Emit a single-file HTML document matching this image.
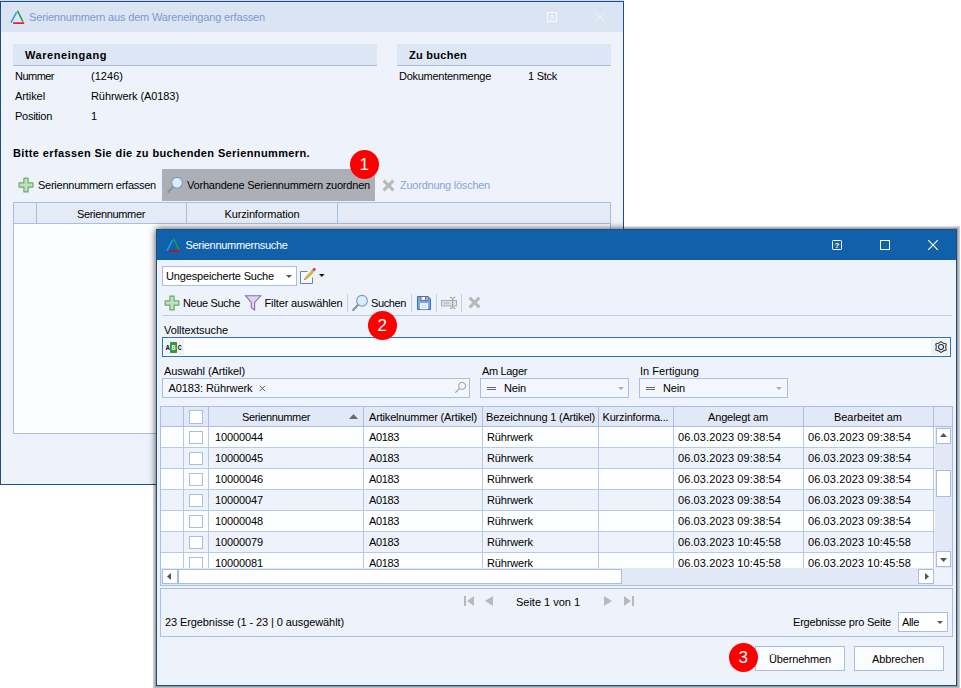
<!DOCTYPE html><html><head><meta charset="utf-8"><title>Seriennummernsuche</title><style>
html,body{margin:0;padding:0;}
body{width:961px;height:688px;position:relative;overflow:hidden;background:#fff;font-family:"Liberation Sans",sans-serif;font-size:11px;}
.a{position:absolute;box-sizing:border-box;}
.t{position:absolute;height:16px;line-height:16px;white-space:nowrap;}
svg{position:absolute;overflow:visible;}
</style></head><body><div class="a" style="left:156px;top:229px;width:801px;height:457px;box-shadow:0 0 0 1px rgba(0,0,0,0.16),0 0 0 2px rgba(0,0,0,0.09),0 0 0 3px rgba(0,0,0,0.12),0 1px 1px 3px rgba(0,0,0,0.08);"></div><div class="a" style="left:0px;top:0px;width:624px;height:1px;background:#cddaef;"></div><div class="a" style="left:0px;top:1px;width:624px;height:484px;background:#eef3fb;border:1px solid #1b4f86;"></div><div class="a" style="left:1px;top:2px;width:622px;height:30px;background:#dbe4f2;"></div><svg style="left:10px;top:10px" width="15" height="15" viewBox="0 0 15 15"><path d="M6.6 2.2 L1 12.7" stroke="#1ea0e6" stroke-width="1.45" fill="none"/><path d="M7.4 0.6 L12.9 11.6" stroke="#1f9e3e" stroke-width="1.5" fill="none"/><path d="M3.2 13.1 H14.2" stroke="#e2001a" stroke-width="1.5" fill="none"/></svg><svg style="left:547px;top:12px" width="10" height="10" viewBox="0 0 10 10"><rect x="0.5" y="0.5" width="9" height="9" fill="none" stroke="#f6f8fc" stroke-width="1"/><text x="5" y="8" font-size="8" font-weight="bold" fill="#f6f8fc" text-anchor="middle" font-family="Liberation Sans, sans-serif">?</text></svg><svg style="left:595px;top:12px" width="10" height="10" viewBox="0 0 10 10"><path d="M0.3 0.3 L9.7 9.7 M9.7 0.3 L0.3 9.7" stroke="#eef2f9" stroke-width="1" fill="none"/></svg><div class="a" style="left:13px;top:44px;width:364px;height:22px;background:#dde6f4;border-bottom:1px solid #a9bee2;"></div><div class="a" style="left:397px;top:44px;width:214px;height:22px;background:#dde6f4;border-bottom:1px solid #a9bee2;"></div><div class="a" style="left:162px;top:169px;width:213px;height:32px;background:#acafb5;"></div><svg style="left:17.5px;top:177px" width="16" height="16" viewBox="0 0 16 16"><path d="M5.9 1.1 H10.1 V5.9 H14.9 V10.1 H10.1 V14.9 H5.9 V10.1 H1.1 V5.9 H5.9 Z" fill="#c3e0be" stroke="#68ad68" stroke-width="1.2" stroke-linejoin="round"/></svg><svg style="left:167px;top:177px" width="16" height="16" viewBox="0 0 16 16"><path d="M5.9 9.9 L1.2 15" stroke="#8395aa" stroke-width="2.2" stroke-linecap="round"/><circle cx="10" cy="5.8" r="5.4" fill="#d7edfd" stroke="#8197b3" stroke-width="1.1"/></svg><svg style="left:381.5px;top:178.7px" width="13" height="13" viewBox="0 0 13 13"><path d="M1.6 1.6 L11.4 11.4 M11.4 1.6 L1.6 11.4" stroke="#b9b9b9" stroke-width="3" fill="none"/></svg><div class="a" style="left:13px;top:202px;width:598px;height:232px;background:#fcfdff;border:1px solid #a9bee2;"></div><div class="a" style="left:13px;top:203px;width:598px;height:1px;background:#b7c8e7;"></div><div class="a" style="left:14px;top:203px;width:596px;height:21px;background:#e4ebf7;border-bottom:1px solid #a9bee2;"></div><div class="a" style="left:36px;top:203px;width:1px;height:21px;background:#a9bee2;"></div><div class="a" style="left:186px;top:203px;width:1px;height:21px;background:#a9bee2;"></div><div class="a" style="left:337px;top:203px;width:1px;height:21px;background:#a9bee2;"></div><div class="a" style="left:0;top:0;width:624px;height:485px;overflow:hidden;"><div class="a" style="left:156px;top:229px;width:801px;height:457px;box-shadow:0 0 7px 0 rgba(0,0,0,0.75);"></div></div><div class="a" style="left:156px;top:229px;width:801px;height:457px;background:#eef3fb;border:1px solid #17508c;"></div><div class="a" style="left:157px;top:230px;width:799px;height:30px;background:#1161aa;"></div><svg style="left:166px;top:238px" width="15" height="15" viewBox="0 0 15 15"><path d="M6.6 2.2 L1 12.7" stroke="#1ea0e6" stroke-width="1.45" fill="none"/><path d="M7.4 0.6 L12.9 11.6" stroke="#1f9e3e" stroke-width="1.5" fill="none"/><path d="M3.2 13.1 H14.2" stroke="#e2001a" stroke-width="1.5" fill="none"/></svg><svg style="left:832px;top:240px" width="10" height="10" viewBox="0 0 10 10"><rect x="0.5" y="0.5" width="9" height="9" rx="0.8" fill="none" stroke="#fff" stroke-width="1"/><text x="5" y="8" font-size="8" font-weight="bold" fill="#fff" text-anchor="middle" font-family="Liberation Sans, sans-serif">?</text></svg><svg style="left:880px;top:240px" width="10" height="10" viewBox="0 0 10 10"><rect x="0.5" y="0.5" width="9" height="9" fill="none" stroke="#fff" stroke-width="1"/></svg><svg style="left:928px;top:240px" width="10" height="10" viewBox="0 0 10 10"><path d="M0.2 0.2 L9.8 9.8 M9.8 0.2 L0.2 9.8" stroke="#fff" stroke-width="1.15" fill="none"/></svg><div class="a" style="left:162px;top:266px;width:135px;height:20px;background:#fff;border:1px solid #a9bee2;"></div><svg style="left:286px;top:275px" width="6" height="3" viewBox="0 0 6 3"><path d="M0 0 H6 L3 3 Z" fill="#555"/></svg><svg style="left:300px;top:267px" width="18" height="18" viewBox="0 0 18 18"><rect x="1" y="5" width="11" height="11" fill="#f4f7fd"/><path d="M7.5 4.5 H0.5 V16.5 H12.5 V10.5" fill="none" stroke="#6f8399" stroke-width="1"/><path d="M4.3 13 L7.3 12 L5.1 9.9 Z" fill="#c9a76c"/><path d="M4.3 13 L5.6 12.6 L4.8 11.7 Z" fill="#333"/><path d="M6.2 11 L12.3 4.4" stroke="#e2ba4e" stroke-width="3" fill="none"/><path d="M6.9 11.6 L13 5" stroke="#c99a35" stroke-width="0.8" fill="none"/><path d="M12.3 4.4 L13.5 3.1" stroke="#9aa7b8" stroke-width="3" fill="none"/><path d="M14.1 2.5 L14.4 2.2" stroke="#e23a48" stroke-width="2.8" stroke-linecap="round" fill="none"/></svg><svg style="left:319px;top:274px" width="5.6" height="3" viewBox="0 0 6 3"><path d="M0 0 H6 L3 3 Z" fill="#111"/></svg><svg style="left:163.5px;top:295px" width="16" height="16" viewBox="0 0 16 16"><path d="M5.9 1.1 H10.1 V5.9 H14.9 V10.1 H10.1 V14.9 H5.9 V10.1 H1.1 V5.9 H5.9 Z" fill="#c3e0be" stroke="#68ad68" stroke-width="1.2" stroke-linejoin="round"/></svg><svg style="left:244px;top:295px" width="18" height="17" viewBox="0 0 18 17"><path d="M1.6 0.8 H16.7 L10.6 7.4 V15 L7.3 12.8 V7.4 Z" fill="#ded6f0" stroke="#8a6fa8" stroke-width="1.1" stroke-linejoin="miter"/></svg><div class="a" style="left:347px;top:294px;width:1px;height:18px;background:#c3d0e6;"></div><svg style="left:352px;top:295px" width="16" height="16" viewBox="0 0 16 16"><path d="M5.9 9.9 L1.2 15" stroke="#8395aa" stroke-width="2.2" stroke-linecap="round"/><circle cx="10" cy="5.8" r="5.4" fill="#d7edfd" stroke="#8197b3" stroke-width="1.1"/></svg><div class="a" style="left:411px;top:294px;width:1px;height:18px;background:#c3d0e6;"></div><svg style="left:416px;top:295px" width="16" height="16" viewBox="0 0 16 16"><path d="M1.5 1.5 H12 L14.5 4 V14.5 H1.5 Z" fill="#7ba6e6" stroke="#3d6dc2" stroke-width="1"/><rect x="5" y="1.6" width="7" height="3.9" fill="#f0f2f5" stroke="#5a5f68" stroke-width="0.8"/><rect x="9" y="2.3" width="1.6" height="2.3" fill="#5a5f68"/><rect x="4" y="8.2" width="8" height="6" fill="#fff"/><path d="M5 10.2 H11 M5 12.3 H11" stroke="#a8d0f0" stroke-width="0.9"/></svg><div class="a" style="left:436px;top:294px;width:1px;height:18px;background:#c3d0e6;"></div><svg style="left:441px;top:296px" width="17" height="14" viewBox="0 0 17 14"><rect x="0.5" y="4.5" width="15" height="5.5" fill="#e2e2e2" stroke="#ababab"/><rect x="2.5" y="6" width="6" height="2.5" fill="#c9c9c9"/><path d="M8.8 1.3 Q11.6 1.3 11.6 3 V10.8 Q11.6 12.5 8.8 12.5 M14.4 1.3 Q11.6 1.3 11.6 3 M11.6 10.8 Q11.6 12.5 14.4 12.5" stroke="#999" stroke-width="1" fill="none"/></svg><div class="a" style="left:461px;top:294px;width:1px;height:18px;background:#c3d0e6;"></div><svg style="left:467.7px;top:296.4px" width="13" height="13" viewBox="0 0 13 13"><path d="M1.6 1.6 L11.4 11.4 M11.4 1.6 L1.6 11.4" stroke="#b8b8b8" stroke-width="3" fill="none"/></svg><div class="a" style="left:162px;top:315px;width:790px;height:1px;background:#bccbe5;"></div><div class="a" style="left:162px;top:337px;width:789px;height:20px;background:#fbfcfe;border:1px solid #2f6fb6;"></div><svg style="left:164px;top:339px" width="20" height="16" viewBox="0 0 20 16"><rect x="0" y="0" width="20" height="16" fill="#eef1f6"/><rect x="6" y="3" width="7" height="11" rx="0.8" fill="#3a9440"/><text x="1.8" y="11.2" font-size="6.6" font-weight="bold" font-family="Liberation Mono, monospace" fill="#111">A</text><text x="7.6" y="11.2" font-size="6.6" font-weight="bold" font-family="Liberation Mono, monospace" fill="#e8f4e8">B</text><text x="13.8" y="11.2" font-size="6.6" font-weight="bold" font-family="Liberation Mono, monospace" fill="#111">C</text></svg><div class="a" style="left:931px;top:339px;width:18px;height:16px;background:#eef2fa;"></div><svg style="left:935px;top:341px" width="12" height="12" viewBox="0 0 12 12"><path d="M6 0.5 Q7.6 2.3 11.2 3.1 Q10.2 6 11.2 8.9 Q7.6 9.7 6 11.5 Q4.4 9.7 0.8 8.9 Q1.8 6 0.8 3.1 Q4.4 2.3 6 0.5 Z" fill="none" stroke="#2b2b2b" stroke-width="1.05" stroke-linejoin="round"/><circle cx="6" cy="6" r="2.5" fill="none" stroke="#2b2b2b" stroke-width="1.05"/></svg><div class="a" style="left:162px;top:378px;width:308px;height:20px;background:#f3f6fc;border:1px solid #a9bee2;"></div><svg style="left:259px;top:385px" width="7" height="7" viewBox="0 0 8 8"><path d="M0.7 0.7 L7 7 M7 0.7 L0.7 7" stroke="#555" stroke-width="1.1"/></svg><svg style="left:455px;top:382px" width="12" height="12" viewBox="0 0 12 12"><circle cx="7.1" cy="3.9" r="3.5" fill="none" stroke="#9b9b9b" stroke-width="1"/><path d="M4.4 6.7 L0.4 10.7" stroke="#9b9b9b" stroke-width="1.1"/></svg><div class="a" style="left:480px;top:378px;width:149px;height:20px;background:#f3f6fc;border:1px solid #a9bee2;"></div><svg style="left:487px;top:385px" width="9" height="6" viewBox="0 0 9 6"><path d="M0 2.5 H9 M0 4.5 H9" stroke="#666" stroke-width="1"/></svg><svg style="left:618px;top:387px" width="6" height="3" viewBox="0 0 6 3"><path d="M0 0 H6 L3 3 Z" fill="#ababab"/></svg><div class="a" style="left:639px;top:378px;width:149px;height:20px;background:#f3f6fc;border:1px solid #a9bee2;"></div><svg style="left:646px;top:385px" width="9" height="6" viewBox="0 0 9 6"><path d="M0 2.5 H9 M0 4.5 H9" stroke="#666" stroke-width="1"/></svg><svg style="left:776px;top:387px" width="6" height="3" viewBox="0 0 6 3"><path d="M0 0 H6 L3 3 Z" fill="#ababab"/></svg><div class="a" style="left:160px;top:406px;width:793px;height:180px;background:#e2e8f5;border:1px solid #a9bee2;"></div><div class="a" style="left:161px;top:407px;width:791px;height:20px;background:#e1e9f6;border-bottom:1px solid #a9bee2;"></div><div class="a" style="left:161px;top:427px;width:775px;height:21px;background:#fdfeff;border-bottom:1px solid #b9cae8;"></div><div class="a" style="left:161px;top:448px;width:775px;height:21px;background:#eef3fb;border-bottom:1px solid #b9cae8;"></div><div class="a" style="left:161px;top:469px;width:775px;height:21px;background:#fdfeff;border-bottom:1px solid #b9cae8;"></div><div class="a" style="left:161px;top:490px;width:775px;height:21px;background:#eef3fb;border-bottom:1px solid #b9cae8;"></div><div class="a" style="left:161px;top:511px;width:775px;height:21px;background:#fdfeff;border-bottom:1px solid #b9cae8;"></div><div class="a" style="left:161px;top:532px;width:775px;height:21px;background:#eef3fb;border-bottom:1px solid #b9cae8;"></div><div class="a" style="left:161px;top:553px;width:775px;height:15px;background:#fdfeff;"></div><div class="a" style="left:183px;top:407px;width:1px;height:20px;background:#a9bee2;"></div><div class="a" style="left:183px;top:427px;width:1px;height:141px;background:#b9cae8;"></div><div class="a" style="left:208px;top:407px;width:1px;height:20px;background:#a9bee2;"></div><div class="a" style="left:208px;top:427px;width:1px;height:141px;background:#b9cae8;"></div><div class="a" style="left:363px;top:407px;width:1px;height:20px;background:#a9bee2;"></div><div class="a" style="left:363px;top:427px;width:1px;height:141px;background:#b9cae8;"></div><div class="a" style="left:482px;top:407px;width:1px;height:20px;background:#a9bee2;"></div><div class="a" style="left:482px;top:427px;width:1px;height:141px;background:#b9cae8;"></div><div class="a" style="left:598px;top:407px;width:1px;height:20px;background:#a9bee2;"></div><div class="a" style="left:598px;top:427px;width:1px;height:141px;background:#b9cae8;"></div><div class="a" style="left:673px;top:407px;width:1px;height:20px;background:#a9bee2;"></div><div class="a" style="left:673px;top:427px;width:1px;height:141px;background:#b9cae8;"></div><div class="a" style="left:803px;top:407px;width:1px;height:20px;background:#a9bee2;"></div><div class="a" style="left:803px;top:427px;width:1px;height:141px;background:#b9cae8;"></div><div class="a" style="left:933px;top:407px;width:1px;height:20px;background:#a9bee2;"></div><div class="a" style="left:933px;top:427px;width:1px;height:141px;background:#b9cae8;"></div><div class="a" style="left:189px;top:410px;width:14px;height:14px;background:#fff;border:1px solid #a9bde0;"></div><svg style="left:349px;top:414px" width="9" height="5" viewBox="0 0 9 5"><path d="M0 5 H9 L4.5 0 Z" fill="#6b6b6b"/></svg><div class="a" style="left:189px;top:431px;width:14px;height:13px;background:#fff;border:1px solid #a9bde0;"></div><div class="a" style="left:189px;top:452px;width:14px;height:13px;background:#fff;border:1px solid #a9bde0;"></div><div class="a" style="left:189px;top:473px;width:14px;height:13px;background:#fff;border:1px solid #a9bde0;"></div><div class="a" style="left:189px;top:494px;width:14px;height:13px;background:#fff;border:1px solid #a9bde0;"></div><div class="a" style="left:189px;top:515px;width:14px;height:13px;background:#fff;border:1px solid #a9bde0;"></div><div class="a" style="left:189px;top:536px;width:14px;height:13px;background:#fff;border:1px solid #a9bde0;"></div><div class="a" style="left:189px;top:557px;width:14px;height:11px;background:#fff;border:1px solid #a9bde0;border-bottom:none;"></div><div class="a" style="left:935px;top:427px;width:17px;height:141px;background:#e2e8f5;"></div><div class="a" style="left:936px;top:428px;width:15px;height:16px;background:#fff;border:1px solid #a9bde0;"></div><svg style="left:940px;top:433px" width="7" height="4" viewBox="0 0 7 4"><path d="M0 4 H7 L3.5 0 Z" fill="#555"/></svg><div class="a" style="left:936px;top:551px;width:15px;height:16px;background:#fff;border:1px solid #a9bde0;"></div><svg style="left:940px;top:558px" width="7" height="4" viewBox="0 0 7 4"><path d="M0 0 H7 L3.5 4 Z" fill="#555"/></svg><div class="a" style="left:936px;top:470px;width:15px;height:27px;background:#fff;border:1px solid #a9bde0;"></div><div class="a" style="left:161px;top:568px;width:773px;height:17px;background:#e2e8f5;"></div><div class="a" style="left:162px;top:569px;width:16px;height:15px;background:#fff;border:1px solid #a9bde0;"></div><svg style="left:167px;top:573px" width="4" height="7" viewBox="0 0 4 7"><path d="M4 0 V7 L0 3.5 Z" fill="#555"/></svg><div class="a" style="left:918px;top:569px;width:16px;height:15px;background:#fff;border:1px solid #a9bde0;"></div><svg style="left:925px;top:573px" width="4" height="7" viewBox="0 0 4 7"><path d="M0 0 V7 L4 3.5 Z" fill="#555"/></svg><div class="a" style="left:178px;top:569px;width:444px;height:15px;background:#fff;border:1px solid #a9bde0;"></div><div class="a" style="left:934px;top:568px;width:18px;height:17px;background:#eef3fb;"></div><div class="a" style="left:160px;top:588px;width:793px;height:49px;background:#eef3fb;border:1px solid #a9bee2;"></div><svg style="left:464px;top:596px" width="10" height="10" viewBox="0 0 10 10"><path d="M1 0 V10" stroke="#b9b9b9" stroke-width="2"/><path d="M10 0 V10 L3 5 Z" fill="#b9b9b9"/></svg><svg style="left:484px;top:596px" width="9" height="10" viewBox="0 0 9 10"><path d="M9 0 V10 L1 5 Z" fill="#b9b9b9"/></svg><svg style="left:604px;top:596px" width="9" height="10" viewBox="0 0 9 10"><path d="M0 0 V10 L8 5 Z" fill="#b9b9b9"/></svg><svg style="left:624px;top:596px" width="10" height="10" viewBox="0 0 10 10"><path d="M9 0 V10" stroke="#b9b9b9" stroke-width="2"/><path d="M0 0 V10 L7 5 Z" fill="#b9b9b9"/></svg><div class="a" style="left:898px;top:612px;width:50px;height:20px;background:#fff;border:1px solid #a9bee2;"></div><svg style="left:937px;top:621px" width="6" height="3" viewBox="0 0 6 3"><path d="M0 0 H6 L3 3 Z" fill="#555"/></svg><div class="a" style="left:755px;top:646px;width:90px;height:25px;background:#fbfcff;border:1px solid #a9bde0;"></div><div class="a" style="left:854px;top:646px;width:90px;height:25px;background:#fbfcff;border:1px solid #a9bde0;"></div><div class="a" style="left:349.8px;top:149.75px;width:29.4px;height:29.4px;border-radius:50%;background:#fe0000;"></div><div class="a" style="left:367.8px;top:310.75px;width:29.4px;height:29.4px;border-radius:50%;background:#fe0000;"></div><div class="a" style="left:728.8px;top:642.75px;width:29.4px;height:29.4px;border-radius:50%;background:#fe0000;"></div><div class="t" style="left:29px;top:9px;font-size:11px;color:#7d99d0;letter-spacing:-0.162px;"><span id="t0">Seriennummern aus dem Wareneingang erfassen</span></div><div class="t" style="left:25px;top:47px;font-size:11px;color:#000;font-weight:bold;letter-spacing:0.551px;"><span id="t1">Wareneingang</span></div><div class="t" style="left:409px;top:47px;font-size:11px;color:#000;font-weight:bold;letter-spacing:0.266px;"><span id="t2">Zu buchen</span></div><div class="t" style="left:15px;top:68px;font-size:11px;color:#000;letter-spacing:-0.529px;"><span id="t3">Nummer</span></div><div class="t" style="left:91px;top:68px;font-size:11px;color:#000;letter-spacing:0.034px;"><span id="t4">(1246)</span></div><div class="t" style="left:15px;top:88px;font-size:11px;color:#000;letter-spacing:-0.080px;"><span id="t5">Artikel</span></div><div class="t" style="left:91px;top:88px;font-size:11px;color:#000;letter-spacing:-0.079px;"><span id="t6">Rührwerk (A0183)</span></div><div class="t" style="left:15px;top:108px;font-size:11px;color:#000;letter-spacing:-0.268px;"><span id="t7">Position</span></div><div class="t" style="left:91px;top:108px;font-size:11px;color:#000;letter-spacing:-0.125px;"><span id="t8">1</span></div><div class="t" style="left:399px;top:68px;font-size:11px;color:#000;letter-spacing:-0.268px;"><span id="t9">Dokumentenmenge</span></div><div class="t" style="left:528px;top:68px;font-size:11px;color:#000;letter-spacing:-0.263px;"><span id="t10">1 Stck</span></div><div class="t" style="left:13px;top:145px;font-size:11px;color:#000;font-weight:bold;letter-spacing:0.377px;"><span id="t11">Bitte erfassen Sie die zu buchenden Seriennummern.</span></div><div class="t" style="left:38px;top:177px;font-size:11px;color:#000;letter-spacing:-0.251px;"><span id="t12">Seriennummern erfassen</span></div><div class="t" style="left:187px;top:177px;font-size:11px;color:#000;letter-spacing:-0.199px;"><span id="t13">Vorhandene Seriennummern zuordnen</span></div><div class="t" style="left:400px;top:177px;font-size:11px;color:#86a3d8;letter-spacing:-0.246px;"><span id="t14">Zuordnung löschen</span></div><div class="t" style="left:-39px;width:300px;text-align:center;top:206px;font-size:11px;color:#000;letter-spacing:-0.345px;"><span id="t15">Seriennummer</span></div><div class="t" style="left:112px;width:300px;text-align:center;top:206px;font-size:11px;color:#000;letter-spacing:-0.136px;"><span id="t16">Kurzinformation</span></div><div class="t" style="left:185.5px;top:237px;font-size:11px;color:#fff;letter-spacing:-0.312px;"><span id="t17">Seriennummernsuche</span></div><div class="t" style="left:166px;top:268px;font-size:11px;color:#000;letter-spacing:-0.165px;"><span id="t18">Ungespeicherte Suche</span></div><div class="t" style="left:183px;top:295px;font-size:11px;color:#000;letter-spacing:-0.355px;"><span id="t19">Neue Suche</span></div><div class="t" style="left:264.5px;top:295px;font-size:11px;color:#000;letter-spacing:-0.131px;"><span id="t20">Filter auswählen</span></div><div class="t" style="left:371px;top:295px;font-size:11px;color:#000;letter-spacing:-0.385px;"><span id="t21">Suchen</span></div><div class="t" style="left:164px;top:321.6px;font-size:11px;color:#000;letter-spacing:-0.064px;"><span id="t22">Volltextsuche</span></div><div class="t" style="left:164px;top:363px;font-size:11px;color:#000;letter-spacing:-0.090px;"><span id="t23">Auswahl (Artikel)</span></div><div class="t" style="left:168.5px;top:380px;font-size:11px;color:#000;letter-spacing:-0.067px;"><span id="t24">A0183: Rührwerk</span></div><div class="t" style="left:482px;top:363px;font-size:11px;color:#000;letter-spacing:-0.338px;"><span id="t25">Am Lager</span></div><div class="t" style="left:504px;top:380px;font-size:11px;color:#000;letter-spacing:-0.156px;"><span id="t26">Nein</span></div><div class="t" style="left:640px;top:363px;font-size:11px;color:#000;letter-spacing:0.025px;"><span id="t27">In Fertigung</span></div><div class="t" style="left:663px;top:380px;font-size:11px;color:#000;letter-spacing:-0.156px;"><span id="t28">Nein</span></div><div class="t" style="left:126px;width:300px;text-align:center;top:409px;font-size:11px;color:#000;letter-spacing:-0.345px;"><span id="t29">Seriennummer</span></div><div class="t" style="left:369px;top:409px;font-size:11px;color:#000;letter-spacing:-0.168px;"><span id="t30">Artikelnummer (Artikel)</span></div><div class="t" style="left:486px;top:409px;font-size:11px;color:#000;letter-spacing:-0.206px;"><span id="t31">Bezeichnung 1 (Artikel)</span></div><div class="t" style="left:602.5px;top:409px;font-size:11px;color:#000;letter-spacing:-0.176px;"><span id="t32">Kurzinforma...</span></div><div class="t" style="left:588px;width:300px;text-align:center;top:409px;font-size:11px;color:#000;letter-spacing:-0.161px;"><span id="t33">Angelegt am</span></div><div class="t" style="left:718px;width:300px;text-align:center;top:409px;font-size:11px;color:#000;letter-spacing:-0.037px;"><span id="t34">Bearbeitet am</span></div><div class="t" style="left:215px;top:429px;font-size:11px;color:#000;letter-spacing:-0.119px;"><span id="t35">10000044</span></div><div class="t" style="left:369px;top:429px;font-size:11px;color:#000;letter-spacing:-0.362px;"><span id="t36">A0183</span></div><div class="t" style="left:487px;top:429px;font-size:11px;color:#000;letter-spacing:-0.135px;"><span id="t37">Rührwerk</span></div><div class="t" style="left:678px;top:429px;font-size:11px;color:#000;letter-spacing:0.109px;"><span id="t38">06.03.2023 09:38:54</span></div><div class="t" style="left:808px;top:429px;font-size:11px;color:#000;letter-spacing:0.109px;"><span id="t39">06.03.2023 09:38:54</span></div><div class="t" style="left:215px;top:450px;font-size:11px;color:#000;letter-spacing:-0.119px;"><span id="t40">10000045</span></div><div class="t" style="left:369px;top:450px;font-size:11px;color:#000;letter-spacing:-0.362px;"><span id="t41">A0183</span></div><div class="t" style="left:487px;top:450px;font-size:11px;color:#000;letter-spacing:-0.135px;"><span id="t42">Rührwerk</span></div><div class="t" style="left:678px;top:450px;font-size:11px;color:#000;letter-spacing:0.109px;"><span id="t43">06.03.2023 09:38:54</span></div><div class="t" style="left:808px;top:450px;font-size:11px;color:#000;letter-spacing:0.109px;"><span id="t44">06.03.2023 09:38:54</span></div><div class="t" style="left:215px;top:471px;font-size:11px;color:#000;letter-spacing:-0.119px;"><span id="t45">10000046</span></div><div class="t" style="left:369px;top:471px;font-size:11px;color:#000;letter-spacing:-0.362px;"><span id="t46">A0183</span></div><div class="t" style="left:487px;top:471px;font-size:11px;color:#000;letter-spacing:-0.135px;"><span id="t47">Rührwerk</span></div><div class="t" style="left:678px;top:471px;font-size:11px;color:#000;letter-spacing:0.109px;"><span id="t48">06.03.2023 09:38:54</span></div><div class="t" style="left:808px;top:471px;font-size:11px;color:#000;letter-spacing:0.109px;"><span id="t49">06.03.2023 09:38:54</span></div><div class="t" style="left:215px;top:492px;font-size:11px;color:#000;letter-spacing:-0.119px;"><span id="t50">10000047</span></div><div class="t" style="left:369px;top:492px;font-size:11px;color:#000;letter-spacing:-0.362px;"><span id="t51">A0183</span></div><div class="t" style="left:487px;top:492px;font-size:11px;color:#000;letter-spacing:-0.135px;"><span id="t52">Rührwerk</span></div><div class="t" style="left:678px;top:492px;font-size:11px;color:#000;letter-spacing:0.109px;"><span id="t53">06.03.2023 09:38:54</span></div><div class="t" style="left:808px;top:492px;font-size:11px;color:#000;letter-spacing:0.109px;"><span id="t54">06.03.2023 09:38:54</span></div><div class="t" style="left:215px;top:513px;font-size:11px;color:#000;letter-spacing:-0.119px;"><span id="t55">10000048</span></div><div class="t" style="left:369px;top:513px;font-size:11px;color:#000;letter-spacing:-0.362px;"><span id="t56">A0183</span></div><div class="t" style="left:487px;top:513px;font-size:11px;color:#000;letter-spacing:-0.135px;"><span id="t57">Rührwerk</span></div><div class="t" style="left:678px;top:513px;font-size:11px;color:#000;letter-spacing:0.109px;"><span id="t58">06.03.2023 09:38:54</span></div><div class="t" style="left:808px;top:513px;font-size:11px;color:#000;letter-spacing:0.109px;"><span id="t59">06.03.2023 09:38:54</span></div><div class="t" style="left:215px;top:534px;font-size:11px;color:#000;letter-spacing:-0.119px;"><span id="t60">10000079</span></div><div class="t" style="left:369px;top:534px;font-size:11px;color:#000;letter-spacing:-0.362px;"><span id="t61">A0183</span></div><div class="t" style="left:487px;top:534px;font-size:11px;color:#000;letter-spacing:-0.135px;"><span id="t62">Rührwerk</span></div><div class="t" style="left:678px;top:534px;font-size:11px;color:#000;letter-spacing:0.109px;"><span id="t63">06.03.2023 10:45:58</span></div><div class="t" style="left:808px;top:534px;font-size:11px;color:#000;letter-spacing:0.109px;"><span id="t64">06.03.2023 10:45:58</span></div><div class="t" style="left:215px;top:555px;font-size:11px;color:#000;letter-spacing:-0.119px;clip-path:inset(0 0 3px 0);"><span id="t65">10000081</span></div><div class="t" style="left:369px;top:555px;font-size:11px;color:#000;letter-spacing:-0.362px;clip-path:inset(0 0 3px 0);"><span id="t66">A0183</span></div><div class="t" style="left:487px;top:555px;font-size:11px;color:#000;letter-spacing:-0.135px;clip-path:inset(0 0 3px 0);"><span id="t67">Rührwerk</span></div><div class="t" style="left:678px;top:555px;font-size:11px;color:#000;letter-spacing:0.109px;clip-path:inset(0 0 3px 0);"><span id="t68">06.03.2023 10:45:58</span></div><div class="t" style="left:808px;top:555px;font-size:11px;color:#000;letter-spacing:0.109px;clip-path:inset(0 0 3px 0);"><span id="t69">06.03.2023 10:45:58</span></div><div class="t" style="left:398px;width:300px;text-align:center;top:594px;font-size:11px;color:#000;letter-spacing:-0.017px;"><span id="t70">Seite 1 von 1</span></div><div class="t" style="left:165px;top:614px;font-size:11px;color:#000;letter-spacing:-0.098px;"><span id="t71">23 Ergebnisse (1 - 23 | 0 ausgewählt)</span></div><div class="t" style="left:793px;top:614px;font-size:11px;color:#000;letter-spacing:-0.206px;"><span id="t72">Ergebnisse pro Seite</span></div><div class="t" style="left:902px;top:614px;font-size:11px;color:#000;letter-spacing:-0.336px;"><span id="t73">Alle</span></div><div class="t" style="left:650px;width:300px;text-align:center;top:651px;font-size:11px;color:#000;letter-spacing:-0.159px;"><span id="t74">Übernehmen</span></div><div class="t" style="left:748px;width:300px;text-align:center;top:651px;font-size:11px;color:#000;letter-spacing:-0.135px;"><span id="t75">Abbrechen</span></div><div class="t" style="left:214.2px;width:300px;text-align:center;top:156.95px;font-size:17px;color:#fff;"><span id="t76">1</span></div><div class="t" style="left:232.2px;width:300px;text-align:center;top:317.95px;font-size:17px;color:#fff;"><span id="t77">2</span></div><div class="t" style="left:593.2px;width:300px;text-align:center;top:649.95px;font-size:17px;color:#fff;"><span id="t78">3</span></div></body></html>
